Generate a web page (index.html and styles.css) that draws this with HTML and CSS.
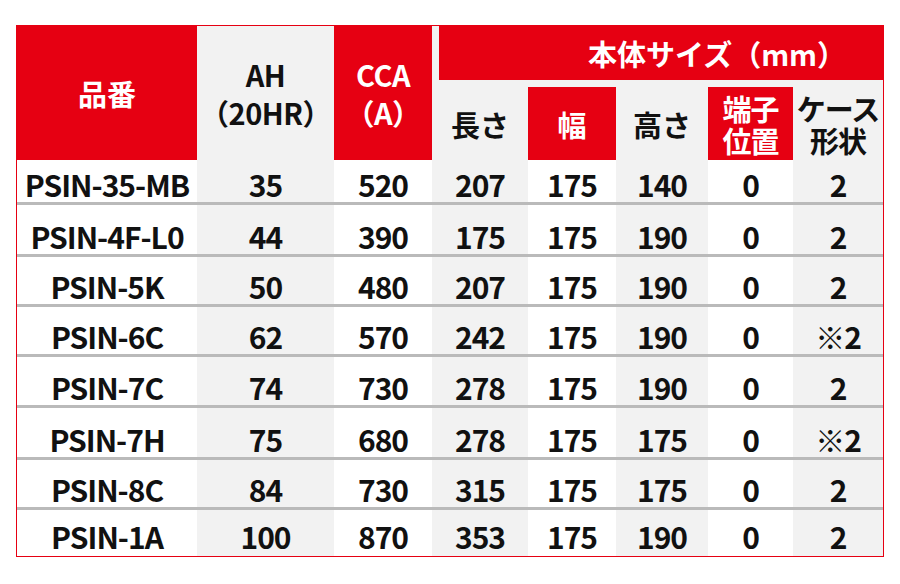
FILE: index.html
```html
<!DOCTYPE html>
<html lang="ja">
<head>
<meta charset="utf-8">
<title>PSIN バッテリー仕様表</title>
<link rel="stylesheet" href="styles.css">
</head>
<body>
<div class="spec">
  <div class="h h-name red">品番</div>
  <div class="h h-ah gray"><span class="two">AH<br>（20HR）</span></div>
  <div class="h h-cca red"><span class="two">CCA<br>（A）</span></div>
  <div class="h h-size"><span class="size-title">本体サイズ（mm）</span></div>
  <div class="h sub gray">長さ</div>
  <div class="h sub red">幅</div>
  <div class="h sub gray">高さ</div>
  <div class="h sub red"><span class="tight">端子<br>位置</span></div>
  <div class="h sub gray"><span class="tight">ケース<br>形状</span></div>

  <div class="c">PSIN-35-MB</div><div class="c g">35</div><div class="c">520</div><div class="c g">207</div><div class="c">175</div><div class="c g">140</div><div class="c">0</div><div class="c g">2</div>
  <div class="c">PSIN-4F-L0</div><div class="c g">44</div><div class="c">390</div><div class="c g">175</div><div class="c">175</div><div class="c g">190</div><div class="c">0</div><div class="c g">2</div>
  <div class="c">PSIN-5K</div><div class="c g">50</div><div class="c">480</div><div class="c g">207</div><div class="c">175</div><div class="c g">190</div><div class="c">0</div><div class="c g">2</div>
  <div class="c">PSIN-6C</div><div class="c g">62</div><div class="c">570</div><div class="c g">242</div><div class="c">175</div><div class="c g">190</div><div class="c">0</div><div class="c g">※2</div>
  <div class="c">PSIN-7C</div><div class="c g">74</div><div class="c">730</div><div class="c g">278</div><div class="c">175</div><div class="c g">190</div><div class="c">0</div><div class="c g">2</div>
  <div class="c">PSIN-7H</div><div class="c g">75</div><div class="c">680</div><div class="c g">278</div><div class="c">175</div><div class="c g">175</div><div class="c">0</div><div class="c g">※2</div>
  <div class="c">PSIN-8C</div><div class="c g">84</div><div class="c">730</div><div class="c g">315</div><div class="c">175</div><div class="c g">175</div><div class="c">0</div><div class="c g">2</div>
  <div class="c last">PSIN-1A</div><div class="c g last">100</div><div class="c last">870</div><div class="c g last">353</div><div class="c last">175</div><div class="c g last">190</div><div class="c last">0</div><div class="c g last">2</div>
</div>
</body>
</html>
```

FILE: styles.css
```css
html, body {
  margin: 0;
  padding: 0;
  background: #ffffff;
}

body {
  font-family: "Noto Sans CJK JP", "Noto Sans", sans-serif;
  font-weight: 700;
  color: #111111;
}

.spec {
  margin: 25px 0 0 16px;
  width: 866px;
  border: 1px solid #e60012;
  display: grid;
  grid-template-columns: 180px 137px 98px 96px 88px 92px 85px 90px;
  grid-template-rows: 54px 80px 45px 52px 50px 50px 51px 52px 50px 46px;
}

.h {
  display: flex;
  align-items: center;
  justify-content: center;
  text-align: center;
  font-size: 29px;
  line-height: 34px;
}

.red {
  background: #e60012;
  color: #ffffff;
}

.gray {
  background: #f2f2f2;
  color: #111111;
}

.h-name,
.h-ah,
.h-cca {
  grid-row: 1 / 3;
}

.two {
  line-height: 38px;
  letter-spacing: -0.5px;
}

.tight {
  line-height: 32px;
  letter-spacing: -1px;
}

.h-size {
  grid-column: 4 / 9;
  background: #e60012;
  color: #ffffff;
  border-left: 7px solid #f2f2f2;
  justify-content: flex-start;
  padding-left: 149px;
}

.size-title {
  white-space: nowrap;
}

.sub {
  border-top: 7px solid #f2f2f2;
}

.c {
  display: flex;
  align-items: flex-end;
  justify-content: center;
  font-size: 30px;
  line-height: 36px;
  letter-spacing: -1px;
  padding-bottom: 0;
  border-bottom: 3px solid #bababa;
  white-space: nowrap;
}

.c.g {
  background: #f2f2f2;
}

.c.last {
  border-bottom: 0;
  padding-bottom: 2px;
}
```
